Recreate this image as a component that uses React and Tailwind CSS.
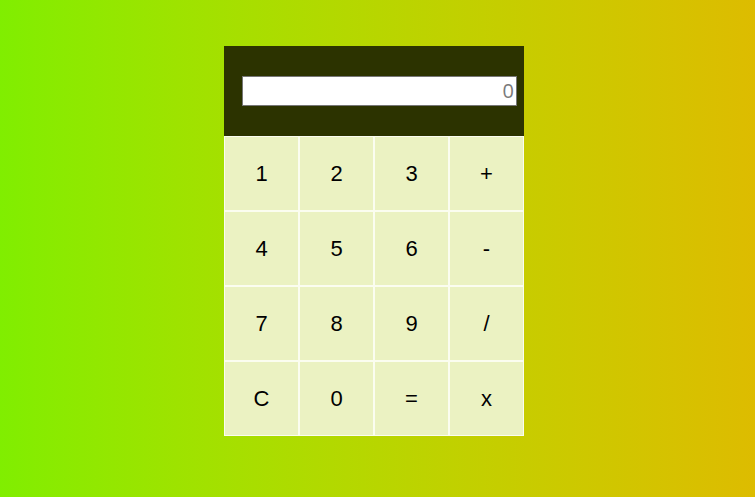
import React, { useState } from 'react';

const keys = ['1', '2', '3', '+', '4', '5', '6', '-', '7', '8', '9', '/', 'C', '0', '=', 'x'];

const Calculator = () => {
  const [value, setValue] = useState('');

  const press = (k) => {
    if (k === 'C') return setValue('');
    if (k === '=') {
      try {
        // eslint-disable-next-line no-eval
        setValue(String(eval(value.replace(/x/g, '*'))));
      } catch (e) {
        setValue('');
      }
      return;
    }
    setValue(v => v + k);
  };

  return (
    <div className="w-[300px]">
      <div className="bg-[#2c3300] pt-[30px] pb-[30px] pl-[18px] pr-[7px]">
        <input
          readOnly
          value={value}
          placeholder="0"
          className="block w-[275px] h-[30px] bg-white border border-[#767676] text-right pr-[2px] text-[20px] text-[#444] placeholder:text-[#7a7a7a] outline-none font-['Open_Sans',sans-serif]"
        />
      </div>
      <div className="grid grid-cols-4">
        {keys.map(k => (
          <button
            key={k}
            onClick={() => press(k)}
            className="h-[75px] bg-[#ebf2c2] border border-[#fbfdf0] text-[22px] text-black font-['Liberation_Sans',Arial,sans-serif] flex items-center justify-center"
          >
            {k}
          </button>
        ))}
      </div>
    </div>
  );
};

const App = () => {
  return (
    <div className="h-[497px] bg-gradient-to-r from-[#80ee00] to-[#ddbc00] pt-[46px]">
      <div className="w-[307px] mx-auto">
        <Calculator />
      </div>
    </div>
  );
};

export default App;
